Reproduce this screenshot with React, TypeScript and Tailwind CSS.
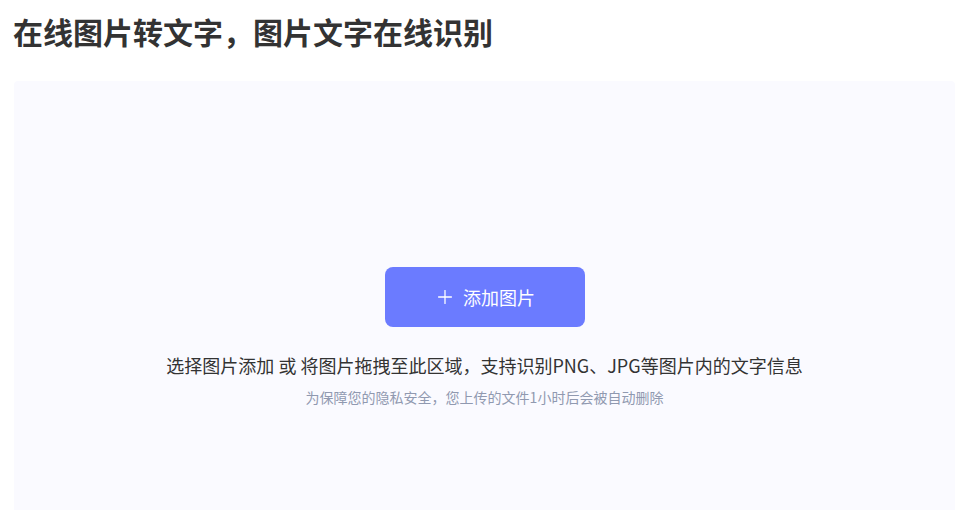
import { Plus } from 'lucide-react'

export default function App() {
  return (
    <div
      className="w-[960px] h-[510px] overflow-hidden bg-white pl-[14px] pr-[5px] pt-[11px]"
      style={{ fontFamily: '"Noto Sans CJK SC", "Noto Sans", sans-serif' }}
    >
      {/* Title */}
      <h1 className="text-[30px] leading-[40px] font-bold text-[#333333] mb-[30px] -ml-[1px]">
        在线图片转文字，图片文字在线识别
      </h1>

      {/* Upload area */}
      <div className="h-[520px] rounded-[4px] bg-[#fafaff] flex flex-col items-center pt-[186px]">
        <button className="w-[200px] h-[60px] rounded-[8px] bg-[#6b7bff] text-white text-[18px] flex items-center justify-center gap-[7px]">
          <Plus size={22} strokeWidth={1.4} />
          添加图片
        </button>
        <p className="mt-[26px] text-[18px] leading-[24px] text-[#333333]">
          选择图片添加 或 将图片拖拽至此区域，支持识别PNG、JPG等图片内的文字信息
        </p>
        <p className="mt-[10px] text-[14px] leading-[20px] text-[#9099b0]">
          为保障您的隐私安全，您上传的文件1小时后会被自动删除
        </p>
      </div>
    </div>
  )
}
